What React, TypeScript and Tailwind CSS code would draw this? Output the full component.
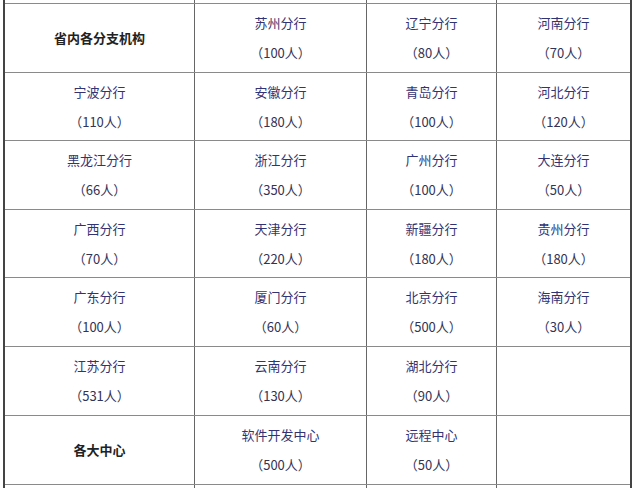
import React from "react";

type Cell = { name?: string; count?: string; header?: string };

const rows: { h: string; cells: Cell[] }[] = [
  {
    h: "h-[69px]",
    cells: [
      { header: "省内各分支机构" },
      { name: "苏州分行", count: "（100人）" },
      { name: "辽宁分行", count: "（80人）" },
      { name: "河南分行", count: "（70人）" },
    ],
  },
  {
    h: "h-[68px]",
    cells: [
      { name: "宁波分行", count: "（110人）" },
      { name: "安徽分行", count: "（180人）" },
      { name: "青岛分行", count: "（100人）" },
      { name: "河北分行", count: "（120人）" },
    ],
  },
  {
    h: "h-[69px]",
    cells: [
      { name: "黑龙江分行", count: "（66人）" },
      { name: "浙江分行", count: "（350人）" },
      { name: "广州分行", count: "（100人）" },
      { name: "大连分行", count: "（50人）" },
    ],
  },
  {
    h: "h-[68px]",
    cells: [
      { name: "广西分行", count: "（70人）" },
      { name: "天津分行", count: "（220人）" },
      { name: "新疆分行", count: "（180人）" },
      { name: "贵州分行", count: "（180人）" },
    ],
  },
  {
    h: "h-[69px]",
    cells: [
      { name: "广东分行", count: "（100人）" },
      { name: "厦门分行", count: "（60人）" },
      { name: "北京分行", count: "（500人）" },
      { name: "海南分行", count: "（30人）" },
    ],
  },
  {
    h: "h-[69px]",
    cells: [
      { name: "江苏分行", count: "（531人）" },
      { name: "云南分行", count: "（130人）" },
      { name: "湖北分行", count: "（90人）" },
      {},
    ],
  },
  {
    h: "h-[69px]",
    cells: [
      { header: "各大中心" },
      { name: "软件开发中心", count: "（500人）" },
      { name: "远程中心", count: "（50人）" },
      {},
    ],
  },
  {
    h: "h-[20px]",
    cells: [{}, {}, {}, {}],
  },
];

const cols = "grid grid-cols-[189px_172px_130px_134px]";

export default function App() {
  return (
    <div
      className="w-[640px] h-[488px] overflow-hidden bg-white"
      style={{ fontFamily: '"Noto Sans CJK SC", "Noto Sans", sans-serif' }}
    >
      <div className="ml-[3px] w-[629px] border-l-2 border-r-2 border-[#444]">
        <div className={`${cols} h-[3px]`}>
          <div />
          <div className="border-l border-[#666]" />
          <div className="border-l border-[#666]" />
          <div className="border-l border-[#666]" />
        </div>
        {rows.map((r, i) => (
          <div key={i} className={`${cols} ${r.h} border-t border-[#8a8a8a]`}>
            {r.cells.map((c, j) => (
              <div
                key={j}
                className={`flex flex-col items-center justify-center ${
                  j > 0 ? "border-l border-[#666]" : ""
                }`}
              >
                {c.header ? (
                  <span className="text-[13px] font-bold text-[#222]">{c.header}</span>
                ) : c.name ? (
                  <>
                    <span className="text-[13px] leading-[30px] text-[#333373]">{c.name}</span>
                    <span className="text-[13px] leading-[30px] text-[#333355]">{c.count}</span>
                  </>
                ) : null}
              </div>
            ))}
          </div>
        ))}
      </div>
    </div>
  );
}
